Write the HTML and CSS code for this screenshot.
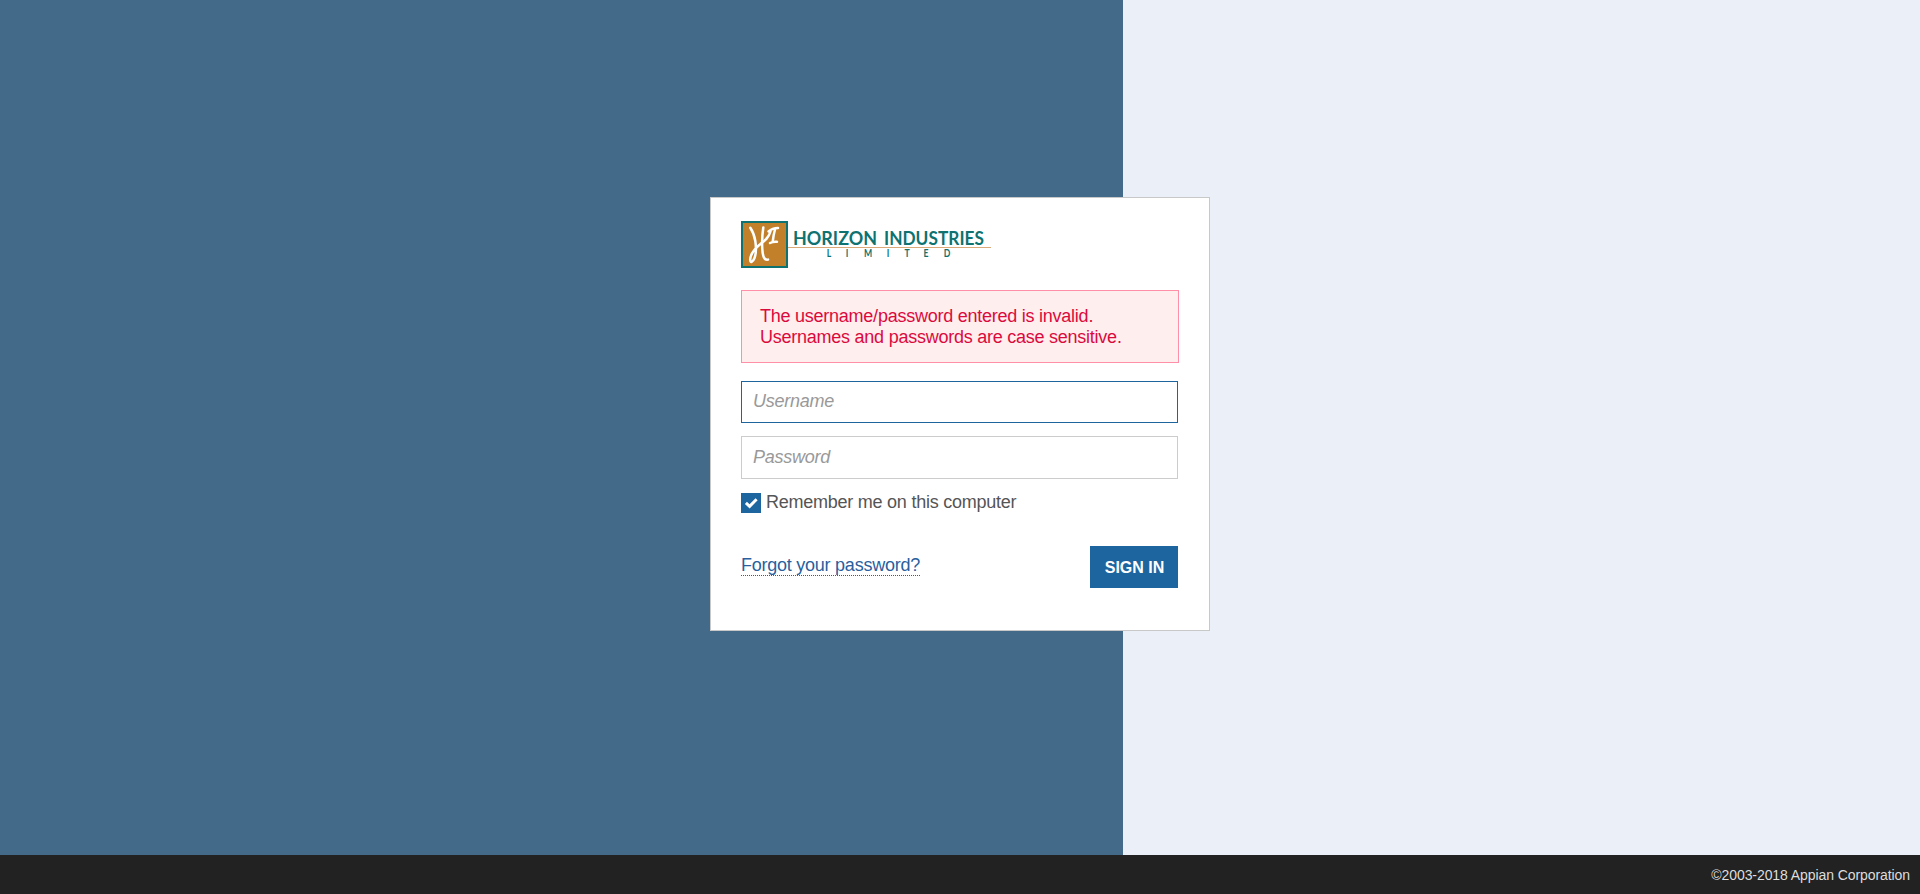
FILE: index.html
```html
<!DOCTYPE html>
<html lang="en">
<head>
<meta charset="utf-8">
<title>Sign In</title>
<link rel="stylesheet" href="styles.css">
</head>
<body>
<main class="stage">
  <form class="card">
    <svg class="logo" width="250" height="47" viewBox="0 0 250 47" role="img" aria-label="Horizon Industries Limited">
      <rect class="logo-frame" x="1" y="1" width="45" height="45"/>
      <g class="logo-script">
        <path d="M9.300 6.800C11.500 10 13.500 15 14.300 20C15.200 26 15 33 13.500 37C12 41 9 42.500 9.200 38.500C9.500 33 15 26.500 20 22.500C24 19.500 27.500 17 29.500 10.500"/>
        <path d="M22.300 6.500C21.300 13 20.800 21 21.300 28C21.600 34 22.800 39.500 27 38.600"/>
        <path d="M27.500 10.500C30 8.200 33 7 37 7M34 8.500C33 12 32.300 16 31.800 20M29 22C31 20.800 33 20.500 36 20.700"/>
      </g>
      <path class="logo-rule" d="M47 26.500H250"/>
      <text class="logo-name" x="52" y="24" textLength="84" lengthAdjust="spacingAndGlyphs">HORIZON</text>
      <text class="logo-name" x="143" y="24" textLength="100" lengthAdjust="spacingAndGlyphs">INDUSTRIES</text>
      <text class="logo-sub" transform="scale(.8 1)" x="110 132.5 158.75 183.75 207.5 231.25 257.5" y="36">LIMITED</text>
    </svg>
    <div class="alert">The username/password entered is invalid.<br>Usernames and passwords are case sensitive.</div>
    <input class="field field-focused" type="text" placeholder="Username">
    <input class="field field-password" type="password" placeholder="Password">
    <div class="remember">
      <span class="checkbox"><svg width="20" height="20" viewBox="0 0 20 20"><path d="M4.900 9.900L8.600 13.300L15.600 6.200"/></svg></span>
      <span>Remember me on this computer</span>
    </div>
    <div class="actions">
      <a class="forgot">Forgot your password?</a>
      <button class="submit" type="button">SIGN IN</button>
    </div>
  </form>
</main>
<footer class="footer">©2003-2018 Appian Corporation</footer>
</body>
</html>
```
FILE: styles.css
```css
* { box-sizing: border-box; }
body {
  margin: 0;
  height: 894px;
  display: flex;
  flex-direction: column;
  overflow: hidden;
  font: 18px/21px "Liberation Sans", Arial, sans-serif;
  letter-spacing: -0.245px;
}
.stage {
  flex: 1;
  padding-top: 197px;
  background: linear-gradient(90deg, #446a89 1123px, #ebeff8 1123px);
}
.card {
  width: 500px;
  height: 434px;
  margin: 0 auto;
  padding: 23px 30px 0;
  background: #fff;
  border: 1px solid #c8c8c8;
  display: flex;
  flex-direction: column;
}
.logo { display: block; flex: none; overflow: visible; letter-spacing: 0; }
.logo-frame { fill: #c2802b; stroke: #0e7370; stroke-width: 2; }
.logo-script path {
  fill: none;
  stroke: #fff;
  stroke-width: 2.5;
  stroke-linecap: round;
  stroke-linejoin: round;
}
.logo-rule { stroke: #d9a978; stroke-width: 1; }
.logo-name { font: 700 18.5px Lato, sans-serif; fill: #0e7370; }
.logo-sub { font: 700 10.8px Lato, sans-serif; fill: #0e7370; text-anchor: middle; }
.alert {
  width: 438px;
  height: 73px;
  margin-top: 22px;
  padding: 15px 18px;
  background: #ffeeee;
  border: 1px solid #ff8fa9;
  color: #db0a3d;
}
.field {
  width: 437px;
  height: 42px;
  margin: 18px 0 0;
  padding: 0 11px 2px;
  border: 1px solid #ccc;
  border-radius: 0;
  outline: 0;
  background: #fff;
  font: inherit;
  letter-spacing: inherit;
}
.field-focused { border-color: #1d659c; }
.field-password { height: 43px; margin-top: 13px; padding-bottom: 1px; }
.field::placeholder { color: #999; font-style: italic; opacity: 1; }
.remember {
  display: flex;
  gap: 5px;
  height: 20px;
  margin-top: 14px;
  line-height: 18px;
  color: #555;
}
.checkbox { width: 20px; height: 20px; background: #1d659f; }
.checkbox svg { display: block; }
.checkbox path { fill: none; stroke: #fff; stroke-width: 3; }
.actions {
  display: flex;
  justify-content: space-between;
  width: 437px;
  margin-top: 33px;
}
.forgot {
  align-self: flex-start;
  margin-top: 9px;
  height: 21px;
  line-height: 20px;
  color: #2a5f9e;
  border-bottom: 1px dotted #555;
}
.submit {
  width: 88px;
  height: 42px;
  padding: 1px 0 0 1px;
  border: 0;
  background: #1d659f;
  color: #fff;
  font: bold 16px "Liberation Sans", Arial, sans-serif;
}
.footer {
  height: 39px;
  padding-right: 10px;
  background: #222;
  color: #ddd;
  font-size: 14px;
  line-height: 40px;
  letter-spacing: -0.08px;
  text-align: right;
}
```
